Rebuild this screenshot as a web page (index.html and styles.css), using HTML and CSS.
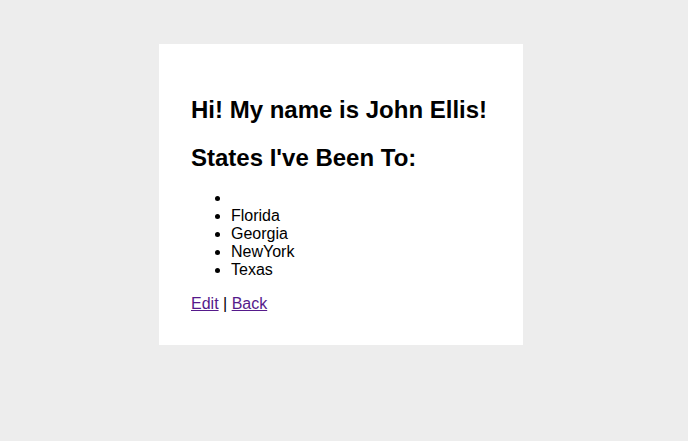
FILE: index.html
```html
<!DOCTYPE html>
<html>
<head>
<meta charset="utf-8">
<link rel="stylesheet" href="styles.css">
</head>
<body>
<div class="card">
  <h2 class="title">Hi! My name is John Ellis!</h2>
  <h2 class="title title-last">States I've Been To:</h2>
  <ul class="states">
    <li></li>
    <li>Florida</li>
    <li>Georgia</li>
    <li>NewYork</li>
    <li>Texas</li>
  </ul>
  <p class="links"><a href="#">Edit</a> | <a href="#">Back</a></p>
</div>
</body>
</html>
```
FILE: styles.css
```css
html, body {
  margin: 0;
  background: #ededed;
}
body {
  padding: 44px 0 0 159px;
  font-family: "Liberation Sans", Arial, sans-serif;
  font-size: 16px;
  color: #000;
}
.card {
  width: 300px;
  background: #fff;
  padding: 32px 32px 16px;
}
.title {
  font-size: 24px;
  font-weight: bold;
  margin: 19.92px 0;
}
.title-last {
  margin-bottom: 17px;
}
.states {
  margin: 0 0 16px;
  padding-left: 40px;
}
.links {
  margin: 16px 0;
}
.links a {
  color: #551a8b;
}
```
